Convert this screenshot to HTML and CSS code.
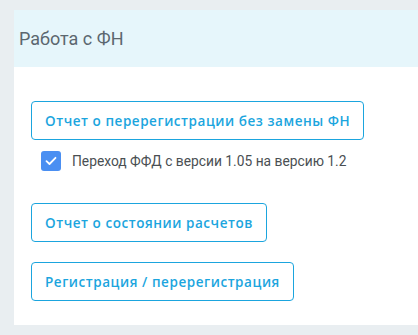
FILE: index.html
```html
<!DOCTYPE html>
<html>
<head>
  <title>Работа с ФН</title>
  <link rel="stylesheet" href="styles.css">
</head>
<body>
  <div class="panel">
    <div class="panel-header">Работа с ФН</div>
    <div class="panel-body">
      <button class="btn-outline">Отчет о перерегистрации без замены ФН</button>
      <label class="check-row">
        <span class="check-box">
          <svg width="12" height="10" viewBox="0 0 12 10"><path d="M1.5 5.2 L4.5 8 L10.5 1.8" fill="none" stroke="#fff" stroke-width="1.8" stroke-linecap="round" stroke-linejoin="round"/></svg>
        </span>
        <span class="check-label">Переход ФФД с версии 1.05 на версию 1.2</span>
      </label>
      <button class="btn-outline btn-gap-lg">Отчет о состоянии расчетов</button>
      <button class="btn-outline btn-gap">Регистрация / перерегистрация</button>
    </div>
  </div>
</body>
</html>
```

FILE: styles.css
```css
body {
  margin: 0;
  padding: 10px 0 8px 14px;
  background: #e9eef1;
  font-family: Roboto, "Liberation Sans", sans-serif;
}

.panel {
  background: #fff;
}

.panel-header {
  height: 57px;
  display: flex;
  align-items: center;
  padding: 0 5px;
  background: #e6f6fb;
  color: #5b676f;
  font-size: 18px;
}

.panel-body {
  display: flex;
  flex-direction: column;
  align-items: flex-start;
  padding: 34px 17px 24px 17px;
}

.btn-outline {
  height: 39px;
  padding: 0 13px;
  border: 1px solid #1ba5de;
  border-radius: 4px;
  background: #fff;
  color: #1ba5de;
  font-family: "Open Sans", sans-serif;
  font-weight: 600;
  font-size: 13.5px;
  letter-spacing: 0.55px;
  cursor: pointer;
}

.btn-gap-lg {
  margin-top: 32px;
}

.btn-gap {
  margin-top: 20px;
}

.check-row {
  display: flex;
  align-items: center;
  gap: 11px;
  margin: 11px 0 0 10px;
}

.check-box {
  width: 20px;
  height: 20px;
  border-radius: 3px;
  background: #4a8ff2;
  display: flex;
  align-items: center;
  justify-content: center;
}

.check-label {
  font-size: 13.8px;
  color: #4a4f53;
}
```
